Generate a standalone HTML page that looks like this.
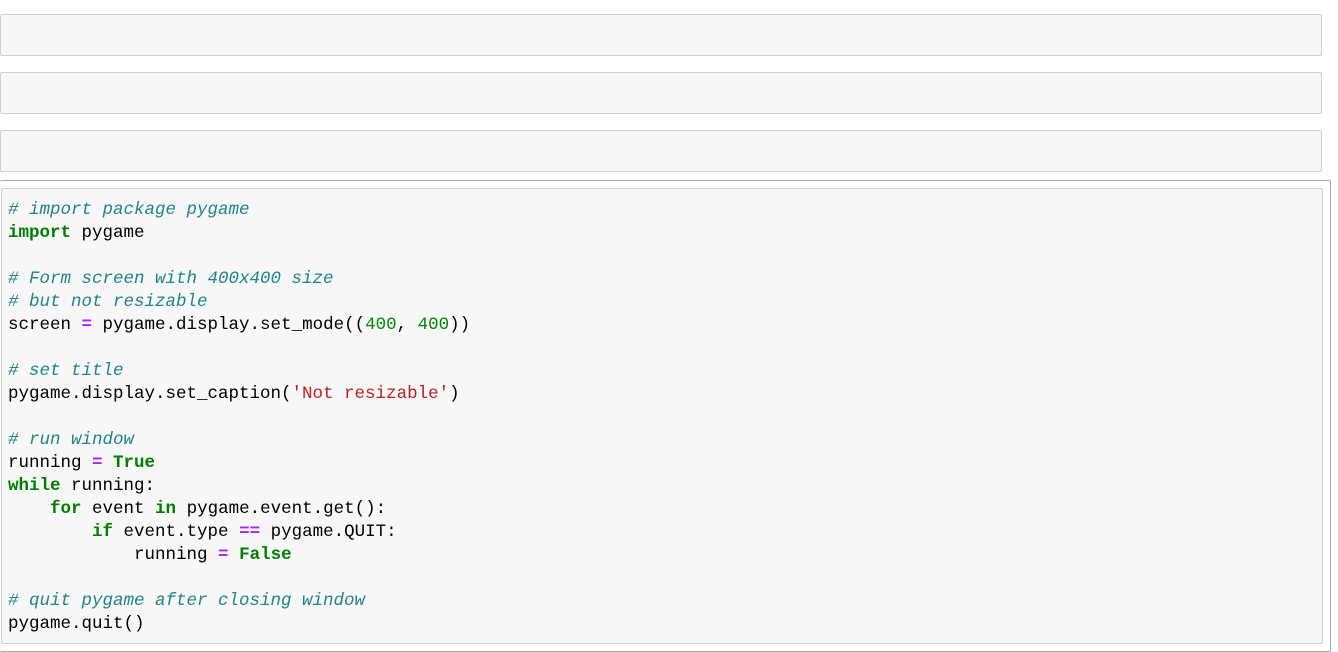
<!DOCTYPE html>
<html><head><style>
body{margin:0;width:1338px;height:652px;background:#fff;position:relative;overflow:hidden}
.e{position:absolute;left:0;width:1320px;height:40px;background:#f7f7f7;border:1px solid #cfcfcf;border-radius:2px}
.outer{position:absolute;left:0;top:180px;width:1330px;height:470px;border:1px solid #ababab;border-radius:2px;border-left:none}
.in{position:absolute;left:1px;top:188px;width:1320px;height:454px;background:#f7f7f7;border:1px solid #cfcfcf;border-radius:2px}
pre{position:absolute;left:8px;top:199px;margin:0;font-family:"Liberation Mono",monospace;font-size:17.5px;line-height:23px;color:#000}
.c{color:#1f8585;font-style:italic}.k{color:#008000;font-weight:bold}.o{color:#aa22ff;font-weight:bold}.n{color:#080}.s{color:#ba2121}
</style></head><body>
<div class="e" style="top:14px"></div>
<div class="e" style="top:72px"></div>
<div class="e" style="top:130px"></div>
<div class="outer"></div>
<div class="in"></div>
<pre><span class="c"># import package pygame</span>
<span class="k">import</span> pygame

<span class="c"># Form screen with 400x400 size</span>
<span class="c"># but not resizable</span>
screen <span class="o">=</span> pygame.display.set_mode((<span class="n">400</span>, <span class="n">400</span>))

<span class="c"># set title</span>
pygame.display.set_caption(<span class="s">'Not resizable'</span>)

<span class="c"># run window</span>
running <span class="o">=</span> <span class="k">True</span>
<span class="k">while</span> running:
    <span class="k">for</span> event <span class="k">in</span> pygame.event.get():
        <span class="k">if</span> event.type <span class="o">==</span> pygame.QUIT:
            running <span class="o">=</span> <span class="k">False</span>

<span class="c"># quit pygame after closing window</span>
pygame.quit()</pre>
</body></html>
